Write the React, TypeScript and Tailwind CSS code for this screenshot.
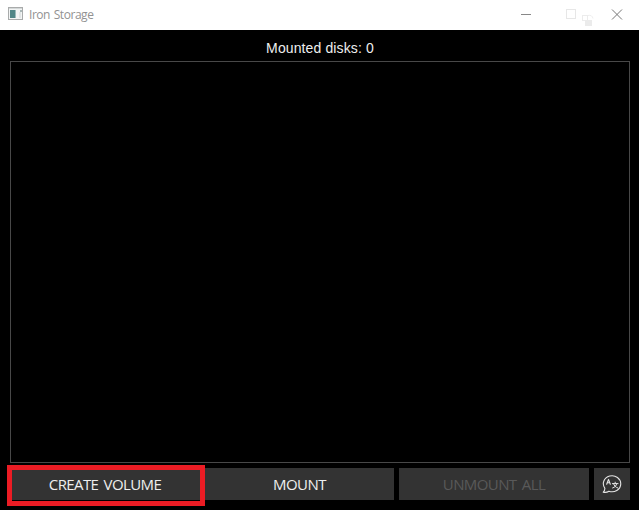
function AppIcon() {
  return (
    <svg className="mb-0.5" width="15" height="14" viewBox="0 0 15 14" aria-hidden="true">
      <rect x="0.5" y="0.5" width="14" height="12" fill="#f2f4f4" stroke="#a9abab" />
      <rect x="1" y="1" width="13" height="1" fill="#d4d8d8" />
      <rect x="2" y="3" width="5" height="8" fill="#508687" />
      <rect x="7" y="3" width="1" height="8" fill="#9ababa" />
      <rect x="12" y="3" width="2" height="2" fill="#a9b7b7" />
      <rect x="11" y="5" width="2" height="6" fill="#e1e5e5" />
    </svg>
  );
}

function WindowControls() {
  return (
    <svg width="118" height="30" viewBox="0 0 118 30" fill="none" aria-hidden="true">
      <path d="M0 14.5H10" stroke="#888888" />
      <rect x="45.5" y="9.5" width="9" height="9" stroke="#e7e7e7" />
      <rect x="61.5" y="15.5" width="5" height="5" stroke="#ececec" />
      <path d="M67 15.5q4-1 5 3" stroke="#efefef" />
      <rect x="64" y="20" width="7" height="6" fill="#ebebeb" />
      <path d="M91 9.5l10 10M101 9.5l-10 10" stroke="#777777" />
    </svg>
  );
}

function LanguageIcon() {
  return (
    <svg width="20" height="20" viewBox="0 0 20 20" fill="none" stroke="#e4e4e4" strokeLinecap="round" strokeLinejoin="round" aria-hidden="true">
      <path d="M2.9 14.3A8.7 8 0 1 1 6.9 17.2C5.3 18.3 3 18.6 1.2 18.1C2.3 17.3 2.9 15.8 2.9 14.3Z" strokeWidth="1.1" />
      <path d="M4.7 10.2L6.5 5.4L8.3 10.2M5.4 8.7H7.6" strokeWidth="1.1" />
      <path d="M10.4 9.6H16M13.2 8.2V9.6M14.8 9.6C14.4 11.6 12.9 13.3 10.6 14M11.6 9.6C12 11.6 13.6 13.3 15.8 14" strokeWidth="1" />
    </svg>
  );
}

const buttonClass =
  'flex h-8 items-center justify-center bg-[#333333] text-[15px] leading-none';

export default function App() {
  return (
    <div className="flex h-[510px] w-[639px] flex-col overflow-hidden bg-black font-['Open_Sans',sans-serif]">
      <header className="flex h-[30px] shrink-0 items-center bg-white pl-2">
        <AppIcon />
        <span className="ml-1.5 text-[12px] leading-none tracking-[-0.45px] [word-spacing:1px] text-[#929292]">Iron Storage</span>
        <div className="ml-auto"><WindowControls /></div>
      </header>
      <main className="flex flex-1 flex-col pr-[9px] pl-2.5">
        <h1 className="h-[31px] pt-[10px] text-center font-['Liberation_Sans',Arial,sans-serif] text-[14px] leading-4 tracking-[0.12px] text-[#eeeeee]">
          Mounted disks: 0
        </h1>
        <section className="h-[402px] border border-[#484848]" />
        <div className="mt-[5px] flex gap-[5px]">
          <div className="relative w-[190px]">
            <button className={`${buttonClass} w-full tracking-[-0.6px] [word-spacing:2px] text-[#eeeeee]`}>CREATE VOLUME</button>
            <div className="pointer-events-none absolute -top-[3px] -left-[3px] h-[41px] w-[198px] border-5 border-[#eb1c24]" />
          </div>
          <button className={`${buttonClass} w-[189px] tracking-[-0.5px] text-[#eeeeee]`}>MOUNT</button>
          <button className={`${buttonClass} w-[190px] tracking-[-0.6px] [word-spacing:2px] text-[#595959]`} disabled>UNMOUNT ALL</button>
          <button className="flex h-8 w-9 items-center justify-center bg-[#333333]" aria-label="Language">
            <LanguageIcon />
          </button>
        </div>
      </main>
    </div>
  );
}
